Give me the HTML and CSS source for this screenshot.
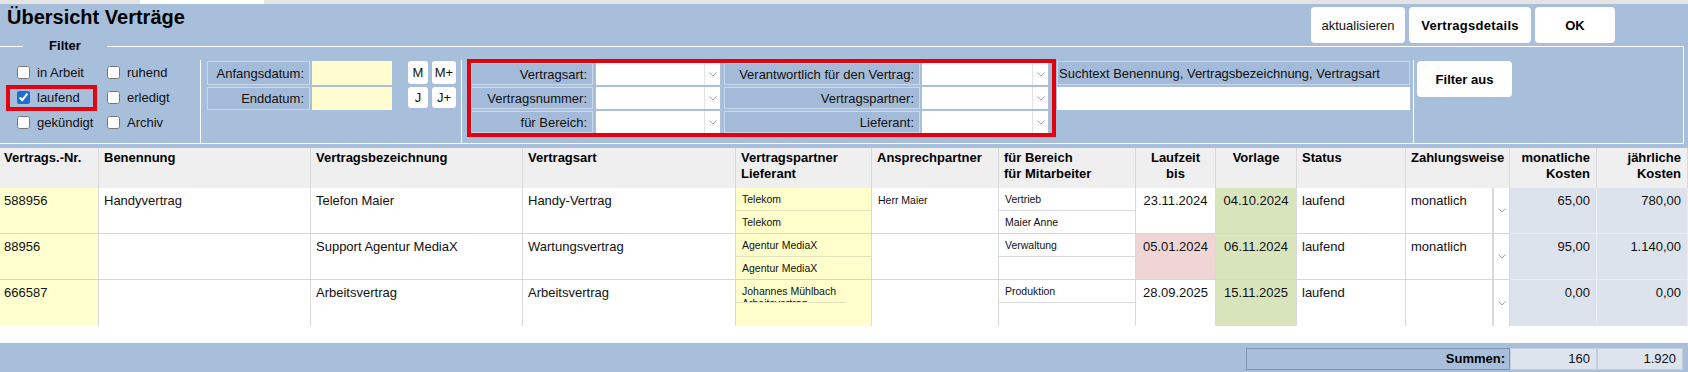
FILE: index.html
```html
<!DOCTYPE html>
<html lang="de">
<head>
    <meta charset="UTF-8">
    <title>Übersicht Verträge</title>
    <link rel="stylesheet" href="styles.css">
</head>

<body>
    <div class="tabstrip"><span class="tab"></span></div>

    <div class="panel">
        <div class="titlebar">
            <h1>Übersicht Verträge</h1>
            <div class="actions">
                <button class="btn btn-refresh">aktualisieren</button>
                <button class="btn btn-strong btn-details">Vertragsdetails</button>
                <button class="btn btn-strong btn-ok">OK</button>
            </div>
        </div>

        <div class="filter">
            <span class="legend">Filter</span>

            <div class="status-group">
                <label class="check"><input type="checkbox"> in Arbeit</label>
                <label class="check"><input type="checkbox"> ruhend</label>
                <label class="check marked"><input type="checkbox" checked> laufend</label>
                <label class="check"><input type="checkbox"> erledigt</label>
                <label class="check"><input type="checkbox"> gekündigt</label>
                <label class="check"><input type="checkbox"> Archiv</label>
            </div>

            <div class="dates">
                <div class="date-fields">
                    <div class="lbl">Anfangsdatum:</div>
                    <div class="date-input"></div>
                    <div class="lbl">Enddatum:</div>
                    <div class="date-input"></div>
                </div>
                <div class="jump">
                    <button class="mini">M</button>
                    <button class="mini">M+</button>
                    <button class="mini">J</button>
                    <button class="mini">J+</button>
                </div>
            </div>

            <div class="criteria">
                <div class="criteria-box">
                    <div class="crit-row">
                        <div class="lbl lbl-a">Vertragsart:</div>
                        <div class="field field-a"></div>
                        <div class="arrow"><svg width="8" height="5" viewBox="0 0 8 5"><polyline points="0.5,0.5 4,4 7.5,0.5" fill="none" stroke="#a3a3a3"/></svg></div>
                        <div class="lbl lbl-b">Verantwortlich für den Vertrag:</div>
                        <div class="field field-b"></div>
                        <div class="arrow"><svg width="8" height="5" viewBox="0 0 8 5"><polyline points="0.5,0.5 4,4 7.5,0.5" fill="none" stroke="#a3a3a3"/></svg></div>
                    </div>
                    <div class="crit-row">
                        <div class="lbl lbl-a">Vertragsnummer:</div>
                        <div class="field field-a"></div>
                        <div class="arrow"><svg width="8" height="5" viewBox="0 0 8 5"><polyline points="0.5,0.5 4,4 7.5,0.5" fill="none" stroke="#a3a3a3"/></svg></div>
                        <div class="lbl lbl-b">Vertragspartner:</div>
                        <div class="field field-b"></div>
                        <div class="arrow"><svg width="8" height="5" viewBox="0 0 8 5"><polyline points="0.5,0.5 4,4 7.5,0.5" fill="none" stroke="#a3a3a3"/></svg></div>
                    </div>
                    <div class="crit-row">
                        <div class="lbl lbl-a">für Bereich:</div>
                        <div class="field field-a"></div>
                        <div class="arrow"><svg width="8" height="5" viewBox="0 0 8 5"><polyline points="0.5,0.5 4,4 7.5,0.5" fill="none" stroke="#a3a3a3"/></svg></div>
                        <div class="lbl lbl-b">Lieferant:</div>
                        <div class="field field-b"></div>
                        <div class="arrow"><svg width="8" height="5" viewBox="0 0 8 5"><polyline points="0.5,0.5 4,4 7.5,0.5" fill="none" stroke="#a3a3a3"/></svg></div>
                    </div>
                </div>
            </div>

            <div class="search">
                <div class="lbl lbl-search">Suchtext Benennung, Vertragsbezeichnung, Vertragsart</div>
                <div class="search-input"></div>
            </div>

            <div class="reset">
                <button class="btn btn-strong btn-reset">Filter aus</button>
            </div>
        </div>
    </div>

    <div class="grid">
        <div class="row head">
            <div class="c first">Vertrags.-Nr.</div>
            <div class="c">Benennung</div>
            <div class="c">Vertragsbezeichnung</div>
            <div class="c">Vertragsart</div>
            <div class="c">Vertragspartner<br>Lieferant</div>
            <div class="c">Ansprechpartner</div>
            <div class="c">für Bereich<br>für Mitarbeiter</div>
            <div class="c center">Laufzeit<br>bis</div>
            <div class="c center">Vorlage</div>
            <div class="c">Status</div>
            <div class="c span2">Zahlungsweise</div>
            <div class="c num">monatliche<br>Kosten</div>
            <div class="c num">jährliche<br>Kosten</div>
        </div>

        <div class="row">
            <div class="c first nr">588956</div>
            <div class="c">Handyvertrag</div>
            <div class="c">Telefon Maier</div>
            <div class="c">Handy-Vertrag</div>
            <div class="c split partner"><div>Telekom</div><div>Telekom</div></div>
            <div class="c small">Herr Maier</div>
            <div class="c split area"><div>Vertrieb</div><div>Maier Anne</div></div>
            <div class="c center">23.11.2024</div>
            <div class="c center due">04.10.2024</div>
            <div class="c">laufend</div>
            <div class="c">monatlich</div>
            <div class="c drop"><svg width="8" height="5" viewBox="0 0 8 5"><polyline points="0.5,0.5 4,4 7.5,0.5" fill="none" stroke="#a3a3a3"/></svg></div>
            <div class="c num cost">65,00</div>
            <div class="c num cost">780,00</div>
        </div>

        <div class="row">
            <div class="c first nr">88956</div>
            <div class="c"></div>
            <div class="c">Support Agentur MediaX</div>
            <div class="c">Wartungsvertrag</div>
            <div class="c split partner"><div>Agentur MediaX</div><div>Agentur MediaX</div></div>
            <div class="c small"></div>
            <div class="c split area"><div>Verwaltung</div><div></div></div>
            <div class="c center expired">05.01.2024</div>
            <div class="c center due">06.11.2024</div>
            <div class="c">laufend</div>
            <div class="c">monatlich</div>
            <div class="c drop"><svg width="8" height="5" viewBox="0 0 8 5"><polyline points="0.5,0.5 4,4 7.5,0.5" fill="none" stroke="#a3a3a3"/></svg></div>
            <div class="c num cost">95,00</div>
            <div class="c num cost">1.140,00</div>
        </div>

        <div class="row last">
            <div class="c first nr">666587</div>
            <div class="c"></div>
            <div class="c">Arbeitsvertrag</div>
            <div class="c">Arbeitsvertrag</div>
            <div class="c split partner"><div class="wrap">Johannes Mühlbach Arbeitsvertrag</div><div></div></div>
            <div class="c small"></div>
            <div class="c split area"><div>Produktion</div><div></div></div>
            <div class="c center">28.09.2025</div>
            <div class="c center due">15.11.2025</div>
            <div class="c">laufend</div>
            <div class="c"></div>
            <div class="c drop"><svg width="8" height="5" viewBox="0 0 8 5"><polyline points="0.5,0.5 4,4 7.5,0.5" fill="none" stroke="#a3a3a3"/></svg></div>
            <div class="c num cost">0,00</div>
            <div class="c num cost">0,00</div>
        </div>
    </div>

    <div class="footer">
        <div class="sum-label">Summen:</div>
        <div class="sum">160</div>
        <div class="sum">1.920</div>
    </div>
</body>

</html>
```

FILE: styles.css
```css
* {
    box-sizing: border-box;
}

body {
    margin: 0;
    width: 1688px;
    height: 372px;
    overflow: hidden;
    font-family: "Liberation Sans", Arial, sans-serif;
    font-size: 13px;
    color: #111;
    background: #fff;
}

button {
    font-family: inherit;
    font-size: 13px;
    color: #111;
}

.tabstrip {
    height: 4px;
    background: #e4e4e4;
    padding-left: 140px;
}

.tab {
    display: block;
    width: 124px;
    height: 4px;
    background: #fff;
}

.panel {
    background: #a7bfdb;
    padding-bottom: 4px;
}

.titlebar {
    height: 42px;
    display: flex;
    justify-content: space-between;
    align-items: flex-start;
    padding: 1px 73px 0 7px;
}

h1 {
    margin: 0;
    font-size: 20px;
    line-height: 24px;
    font-weight: bold;
    color: #000;
}

.actions {
    display: flex;
    gap: 4px;
    padding-top: 2px;
}

.btn {
    height: 36px;
    border: none;
    border-radius: 4px;
    background: #fff;
    padding: 0;
}

.btn-strong {
    font-weight: bold;
    color: #000;
}

.btn-refresh {
    width: 94px;
}

.btn-details {
    width: 122px;
    letter-spacing: 0.3px;
}

.btn-ok {
    width: 80px;
}

/* filter group */
.filter {
    position: relative;
    width: 1684px;
    height: 98px;
    border-top: 1px solid #fff;
    border-bottom: 1px solid #fff;
    border-right: 1px solid #fff;
    padding-top: 13px;
    display: flex;
}

.legend {
    position: absolute;
    left: 23px;
    top: -9px;
    width: 84px;
    line-height: 15px;
    text-align: center;
    background: #a7bfdb;
    font-weight: bold;
    color: #000;
}

.status-group {
    width: 200px;
    padding-left: 10px;
    display: grid;
    grid-template-columns: 90px 90px;
    grid-auto-rows: 25px;
    align-items: center;
}

.check {
    display: flex;
    align-items: center;
    gap: 7px;
    width: 83px;
    height: 18px;
    padding-left: 7px;
}

.check input {
    margin: 0;
    width: 13px;
    height: 13px;
    accent-color: #1a6ed6;
}

.check.marked {
    outline: 4px solid #e3000f;
}

.lbl {
    display: flex;
    align-items: center;
    justify-content: flex-end;
    padding-right: 5px;
    background: #a3bbd8;
    border: 1px solid #c8d7e9;
    white-space: nowrap;
}

.dates {
    width: 261px;
    border-left: 1px solid #fff;
    padding: 1px 0 0 6px;
    display: flex;
}

.date-fields {
    display: grid;
    grid-template-columns: 103px 80px;
    grid-template-rows: 24px 23px;
    column-gap: 2px;
    row-gap: 2px;
    align-self: flex-start;
}

.date-input {
    background: #fffdd0;
}

.jump {
    margin-left: 16px;
    display: grid;
    grid-template-columns: 20px 24px;
    grid-template-rows: 23px 21px;
    column-gap: 4px;
    row-gap: 3px;
    align-self: flex-start;
}

.mini {
    border: none;
    border-radius: 3px;
    background: #fff;
    padding: 0;
}

.criteria {
    border-left: 1px solid #fff;
    padding-left: 5px;
}

.criteria-box {
    margin-top: -1px;
    width: 589px;
    height: 78px;
    border: 4px solid #e3000f;
    padding-right: 4px;
    display: flex;
    flex-direction: column;
    gap: 2px;
}

.crit-row {
    display: flex;
    height: 22px;
}

.lbl-a {
    width: 122px;
}

.lbl-b {
    width: 196px;
    margin-left: 4px;
}

.field {
    background: #fff;
}

.field-a {
    width: 108px;
    margin-left: 3px;
}

.field-b {
    width: 110px;
    margin-left: 2px;
}

.arrow {
    width: 16px;
    background: #fff;
    border-left: 1px solid #e2e2e2;
    display: flex;
    align-items: center;
    justify-content: center;
}

.search {
    padding: 1px 3px 0 1px;
    display: flex;
    flex-direction: column;
    gap: 2px;
}

.lbl-search {
    width: 353px;
    height: 24px;
    justify-content: flex-start;
    padding-left: 1px;
}

.search-input {
    width: 353px;
    height: 23px;
    background: #fff;
}

.reset {
    flex: 1;
    border-left: 1px solid #fff;
    padding: 1px 0 0 3px;
}

.btn-reset {
    width: 95px;
}

/* table */
.row {
    display: grid;
    grid-template-columns: 99px 212px 212px 213px 136px 127px 137px 80px 81px 109px 87px 17px 87px 91px;
    height: 46px;
}

.c {
    border-right: 1px solid #d9d9d9;
    border-bottom: 1px solid #d6d6d6;
    padding: 5px 5px 0;
    line-height: 15px;
    white-space: nowrap;
    overflow: hidden;
}

.c.first {
    padding-left: 4px;
}

.c.small {
    font-size: 10.5px;
    padding-left: 6px;
}

.head {
    height: 40px;
    background: #efefef;
}

.head .c {
    padding-top: 2px;
    line-height: 16px;
    font-weight: bold;
    color: #000;
    border-bottom: none;
}

.span2 {
    grid-column: span 2;
}

.center {
    text-align: center;
}

.num {
    text-align: right;
    padding-right: 6px;
}

.nr {
    background: #ffffd0;
}

.split {
    padding: 0;
    font-size: 10.5px;
}

.split div {
    height: 23px;
    padding: 5px 0 0 6px;
    line-height: 12px;
    overflow: hidden;
    white-space: normal;
}

.partner {
    background: #ffffcc;
}

.partner div:first-child {
    border-bottom: 1px solid #e4e2bc;
}

.area div:first-child {
    border-bottom: 1px solid #d9d9d9;
}

.wrap {
    width: 110px;
}

.due {
    background: #d8e4bc;
}

.expired {
    background: #f0d5d5;
}

.drop {
    padding: 0;
    border-left: 1px solid #dadada;
    display: flex;
    align-items: center;
    justify-content: center;
}

.cost {
    background: #dde3ec;
    border-right-color: #e9edf3;
    border-bottom-color: #e9edf3;
}

.last .c {
    border-bottom: none;
}

/* footer */
.footer {
    margin-top: 17px;
    height: 29px;
    background: #a7bfdb;
    display: flex;
    justify-content: flex-end;
    align-items: flex-start;
    padding: 5px 5px 0 0;
}

.sum-label {
    width: 264px;
    height: 22px;
    border: 1px solid #7f93ad;
    text-align: right;
    padding-right: 4px;
    line-height: 20px;
    font-weight: bold;
    color: #000;
}

.sum {
    height: 22px;
    width: 87px;
    background: #dde4ee;
    border: 1px solid #c4cfdc;
    text-align: right;
    padding-right: 6px;
    line-height: 20px;
}

.sum:last-child {
    width: 86px;
}
```
